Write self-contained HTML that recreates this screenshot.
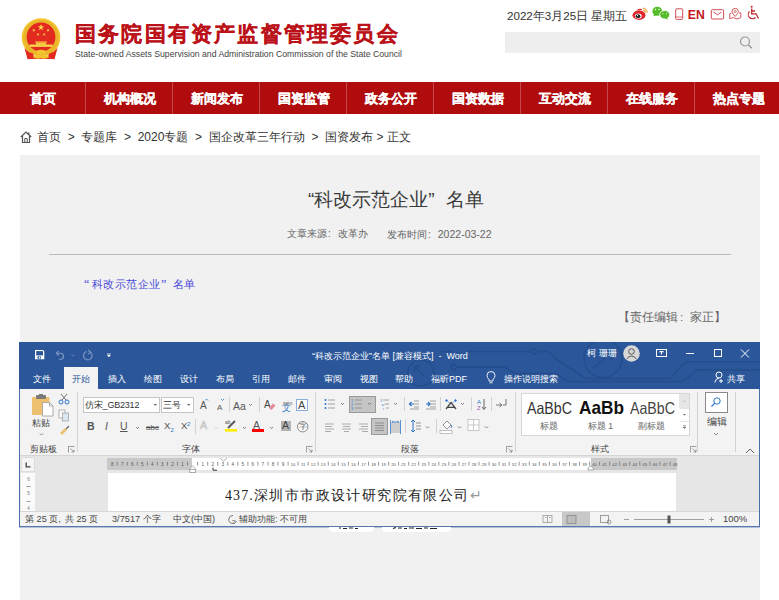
<!DOCTYPE html>
<html><head><meta charset="utf-8">
<style>
*{margin:0;padding:0;box-sizing:border-box}
html,body{width:779px;height:600px;overflow:hidden;background:#fff;font-family:"Liberation Sans",sans-serif;color:#333}
.a{position:absolute;white-space:nowrap}
#nav{position:absolute;left:0;top:82px;width:779px;height:32px;background:#b00c0e}
#nav div{position:absolute;top:0;height:32px;width:87px;color:#fff;font-weight:bold;font-size:13.2px;line-height:34px;text-align:center;-webkit-text-stroke:0.25px #fff}
#nav i{position:absolute;top:0;width:1px;height:32px;background:#c4474b}
#panel{position:absolute;left:20px;top:155px;width:740px;height:445px;background:#f1f1f1}
</style></head><body>
<!-- emblem -->
<svg class="a" style="left:20px;top:17px" width="42" height="44" viewBox="20 17 42 44">
  <circle cx="41" cy="37.5" r="19.3" fill="#f4c531"/>
  <circle cx="41" cy="37.5" r="17.6" fill="#eab52a"/>
  <circle cx="41" cy="37" r="14.4" fill="#e32a21"/>
  <polygon points="41.00,24.00 41.84,26.24 44.23,26.35 42.36,27.84 43.00,30.15 41.00,28.83 39.00,30.15 39.64,27.84 37.77,26.35 40.16,26.24" fill="#f9d448"/>
  <polygon points="34.38,28.70 34.39,29.90 35.50,30.36 34.36,30.74 34.27,31.93 33.56,30.97 32.39,31.25 33.09,30.28 32.46,29.25 33.60,29.61" fill="#f9d448"/>
  <polygon points="47.52,28.70 48.30,29.61 49.44,29.25 48.81,30.28 49.51,31.25 48.34,30.97 47.63,31.93 47.54,30.74 46.40,30.36 47.51,29.90" fill="#f9d448"/>
  <polygon points="38.28,32.82 38.48,33.93 39.58,34.18 38.59,34.72 38.70,35.84 37.88,35.06 36.85,35.51 37.33,34.49 36.59,33.65 37.71,33.80" fill="#f9d448"/>
  <polygon points="43.92,32.82 44.49,33.80 45.61,33.65 44.87,34.49 45.35,35.51 44.32,35.06 43.50,35.84 43.61,34.72 42.62,34.18 43.72,33.93" fill="#f9d448"/>
  <path d="M35.5 41.5 H46.5 L47.5 42.6 H34.5Z" fill="#f9d448"/>
  <rect x="36" y="42.6" width="10" height="2.2" fill="#f7cf3f"/>
  <rect x="29.5" y="44.5" width="23" height="2.4" fill="#f9d448"/>
  <path d="M25.5 47.5 Q41 58 56.5 47.5 L55.5 50.5 Q41 60 26.5 50.5Z" fill="#eab52a"/>
  <path d="M24.5 48 Q28 52.5 33 53.5 L34 58.8 L27.5 59.2 Z" fill="#e32a21"/>
  <path d="M57.5 48 Q54 52.5 49 53.5 L48 58.8 L54.5 59.2 Z" fill="#e32a21"/>
  <path d="M31 55 Q41 58.5 51 55 L51.5 59 H30.5Z" fill="#e32a21"/>
  <ellipse cx="41" cy="52" rx="5.5" ry="2.2" fill="#f4c531"/>
  <path d="M32.5 57 Q36.5 54.5 41 56.5 Q45.5 54.5 49.5 57 Q45.5 59.5 41 58.2 Q36.5 59.5 32.5 57Z" fill="#f4c531"/>
</svg>
<div class="a" style="left:75px;top:20px;font-size:21px;line-height:28px;font-weight:bold;color:#bb1219;letter-spacing:2.2px;-webkit-text-stroke:0.3px #bb1219">国务院国有资产监督管理委员会</div>
<div class="a" style="left:75px;top:48px;font-size:8.7px;line-height:12px;color:#444;letter-spacing:0px">State-owned Assets Supervision and Administration Commission of the State Council</div>

<div class="a" style="left:507px;top:8px;font-size:11.6px;line-height:16px;color:#333">2022年3月25日 星期五</div>
<div class="a" style="left:505px;top:32px;width:255px;height:21px;background:#eeeeee"></div>
<svg class="a" style="left:739px;top:36px" width="14" height="13" viewBox="0 0 14 13"><circle cx="6" cy="5.5" r="4.5" fill="none" stroke="#999" stroke-width="1.2"/><line x1="9.2" y1="8.8" x2="12.8" y2="12.3" stroke="#999" stroke-width="1.4"/></svg>


<!-- header icons -->
<svg class="a" style="left:631px;top:5px" width="130" height="16" viewBox="631 5 130 16">
 <ellipse cx="639" cy="15.3" rx="6.5" ry="4.7" fill="#e0262c"/>
 <path d="M636 10.5 Q640 7.5 642.5 10" fill="#e0262c"/>
 <ellipse cx="638.3" cy="16" rx="3.4" ry="2.6" fill="#fff"/>
 <ellipse cx="638" cy="16.2" rx="2.4" ry="1.9" fill="#222"/>
 <circle cx="637.5" cy="15.6" r="0.6" fill="#fff"/>
 <path d="M642.8 8.2 A4.5 4.5 0 0 1 647.2 12.8 M642.8 10.3 A2.5 2.5 0 0 1 645.2 12.8" fill="none" stroke="#f0a040" stroke-width="1.2"/>
 <ellipse cx="657.3" cy="11.2" rx="4.9" ry="4.5" fill="#55bd2a"/>
 <path d="M654 14 L653.5 16.5 L656.5 15Z" fill="#55bd2a"/>
 <ellipse cx="664.7" cy="14.7" rx="5" ry="4.2" fill="#55bd2a" stroke="#fff" stroke-width="0.8"/>
 <path d="M667 17.5 L668 19.5 L665 18.5Z" fill="#55bd2a"/>
 <circle cx="655.5" cy="9.5" r="0.7" fill="#fff"/><circle cx="659" cy="9.5" r="0.7" fill="#fff"/>
 <circle cx="663" cy="13.8" r="0.55" fill="#fff"/><circle cx="666.5" cy="13.8" r="0.55" fill="#fff"/>
 <rect x="675.7" y="8.8" width="7" height="10.6" rx="0.8" fill="none" stroke="#d44c52" stroke-width="1"/>
 <path d="M675.7 17 H682.7" stroke="#d44c52" stroke-width="0.8"/>
 <text x="687.8" y="19.2" font-family="Liberation Sans" font-weight="bold" font-size="12.2" fill="#c4161c">EN</text>
 <rect x="711.3" y="9.7" width="12.3" height="9.3" rx="1" fill="none" stroke="#d44c52" stroke-width="1"/>
 <path d="M713.5 12 L717.5 14.8 L721.5 12" fill="none" stroke="#d44c52" stroke-width="1"/>
 <path d="M731.5 13 L729.7 13.8 V18.8 L733 17.5 L737 19 L740.8 17.7 V12.6 L739 13.3" fill="none" stroke="#d44c52" stroke-width="0.9"/>
 <path d="M735.2 16.5 Q732 13 732 11.5 A3.2 3.2 0 0 1 738.4 11.5 Q738.4 13 735.2 16.5Z" fill="#fff" stroke="#d44c52" stroke-width="0.9"/>
 <circle cx="735.2" cy="11.4" r="1.1" fill="none" stroke="#d44c52" stroke-width="0.8"/>
 <circle cx="751.7" cy="6.8" r="1" fill="#c4262c"/>
 <path d="M751.7 8.5 V13.8 H756 L758.5 18.5 M751.7 11 H755" fill="none" stroke="#c4262c" stroke-width="1.3"/>
 <path d="M749.5 11.5 A4.1 4.1 0 1 0 755.5 17.5" fill="none" stroke="#c4262c" stroke-width="1.1"/>
</svg>
<!-- breadcrumb home -->
<svg class="a" style="left:20px;top:131px" width="12" height="12" viewBox="0 0 12 12">
 <path d="M0.8 6 L6 1 L11.2 6" fill="none" stroke="#555" stroke-width="1.2"/>
 <path d="M2.5 5 V11.5 H9.5 V5" fill="none" stroke="#555" stroke-width="1.2"/>
 <path d="M4.8 11.5 V7.5 H7.2 V11.5" fill="none" stroke="#555" stroke-width="1"/>
 <rect x="8" y="1.5" width="1.4" height="2.5" fill="#555"/>
</svg>
<div id="nav">
  <div style="left:-1px">首页</div><i style="left:85px"></i>
  <div style="left:86px">机构概况</div><i style="left:172px"></i>
  <div style="left:173px">新闻发布</div><i style="left:259px"></i>
  <div style="left:260px">国资监管</div><i style="left:346px"></i>
  <div style="left:347px">政务公开</div><i style="left:433px"></i>
  <div style="left:434px">国资数据</div><i style="left:520px"></i>
  <div style="left:521px">互动交流</div><i style="left:607px"></i>
  <div style="left:608px">在线服务</div><i style="left:694px"></i>
  <div style="left:695px">热点专题</div>
</div>
</div>

<div class="a" style="left:37px;top:130px;font-size:12px;line-height:14px;color:#333">首页 &nbsp;&gt;&nbsp; 专题库 &nbsp;&gt;&nbsp; 2020专题 &nbsp;&gt;&nbsp; 国企改革三年行动 &nbsp;&gt;&nbsp; 国资发布 &gt; 正文</div>

<div id="panel"></div>
<div class="a" style="left:308px;top:188px;font-size:19px;line-height:24px;color:#3a3a3a">“科改示范企业”</div><div class="a" style="left:446px;top:188px;font-size:19px;line-height:24px;color:#3a3a3a">名单</div>
<div class="a" style="left:287px;top:227px;font-size:10px;line-height:14px;color:#666">文章来源<span style="letter-spacing:7px;margin-left:1px">:</span>改革办</div><div class="a" style="left:387px;top:227px;font-size:10px;line-height:14px;color:#666">发布时间<span style="letter-spacing:7px;margin-left:1px">:</span><span style="font-size:10.5px">2022-03-22</span></div>
<div class="a" style="left:49px;top:254px;width:682px;height:1px;background:#bbb"></div>
<div class="a" style="left:84px;top:277px;font-size:12px;line-height:14px;color:#4848d8;font-family:'Liberation Serif',serif">“</div>
<div class="a" style="left:92px;top:277px;font-size:11px;line-height:14px;color:#4848d8;letter-spacing:0.45px">科改示范企业</div>
<div class="a" style="left:161px;top:277px;font-size:12px;line-height:14px;color:#4848d8;font-family:'Liberation Serif',serif">”</div>
<div class="a" style="left:173px;top:277px;font-size:11px;line-height:14px;color:#4848d8;letter-spacing:0.45px">名单</div>
<div class="a" style="left:618px;top:309px;font-size:11.5px;line-height:16px;color:#666">【责任编辑<span style="letter-spacing:7px;margin-left:2px">:</span>家正】</div>

<!-- WORD WINDOW -->
<style>
.w{position:absolute;white-space:nowrap;font-family:"Liberation Sans",sans-serif}
.wt{position:absolute;top:371.5px;font-size:9px;line-height:14px;color:#fff;white-space:nowrap}
.rl{position:absolute;font-size:9.3px;line-height:12px;color:#444;white-space:nowrap}
.sep{position:absolute;width:1px;background:#d2d2d2}
.dd{position:absolute;width:5px;height:5px}
</style>
<div class="w" style="left:19px;top:342px;width:741px;height:47px;background:#2b579a"></div>
<svg class="w" style="left:19px;top:342px" width="741" height="47" viewBox="19 342 741 47">
 <g fill="none" stroke="#234d8c" stroke-width="1.5">
  <path d="M468 351.6 H531.4 M536.6 351.6 H548 L560 361.8 L585.7 378.5 H670.4 L685.8 361.8 H760"/>
  <circle cx="534" cy="351.6" r="2.6"/>
  <circle cx="453.8" cy="367" r="2.6"/>
  <path d="M456.4 367 H504.5 L514.7 373.4 H556 L568 381.5 H683 L697 370 H760"/>
  <circle cx="603" cy="358.5" r="19"/>
  <path d="M593.5 368 L611 353 M604 353 H611 V360"/>
  <circle cx="420.8" cy="373" r="13"/>
  <path d="M424.3 376 L414.7 366.3 M414.7 372 V366.3 H420.4"/>
  <path d="M440 351.6 L452 351.6"/>
 </g>
</svg>
<!-- border -->
<div class="w" style="left:19px;top:389px;width:1px;height:138px;background:#4a6ea8"></div>
<div class="w" style="left:759px;top:389px;width:1px;height:138px;background:#4a6ea8"></div>
<div class="w" style="left:19px;top:526px;width:741px;height:1px;background:#5878ad"></div><div class="w" style="left:19px;top:527px;width:741px;height:1px;background:#b3c1d8"></div>
<!-- QAT -->
<svg class="w" style="left:34px;top:349px" width="80" height="12" viewBox="34 349 80 12">
 <path d="M35 350 H43 L44.3 351.3 V359.3 H35Z" fill="#fff"/>
 <rect x="36.2" y="351.1" width="6.8" height="4.3" fill="#2b579a"/>
 <rect x="37.5" y="356.4" width="3.5" height="2.3" fill="#2b579a"/>
 <rect x="39" y="356.9" width="1.2" height="1.5" fill="#fff"/>
 <g stroke="#7f98c4" fill="none" stroke-width="1.1">
  <path d="M56.5 353.2 H60.5 A3 3 0 0 1 60.5 359.2 H59"/><path d="M58.8 350.9 L56.3 353.2 L58.8 355.5"/>
  <path d="M71.3 354.5 l1.4 1.4 l1.4 -1.4" stroke-width="0.7"/>
  <path d="M86.5 351.5 A4.3 4.3 0 1 0 90.6 352.3"/><path d="M88.2 350 L90.8 352.4 L88 354"/>
 </g>
 <path d="M107 355 H110.8 L108.9 357.2Z" fill="#fff"/><rect x="107" y="353.6" width="3.8" height="0.8" fill="#fff"/>
</svg>
<div class="w" style="left:312px;top:350px;font-size:9px;line-height:12px;color:#fff">“科改示范企业”名单 [兼容模式] &nbsp;- &nbsp;Word</div>
<div class="w" style="left:587px;top:347px;font-size:9.2px;line-height:12px;color:#fff">柯 珊珊</div>
<svg class="w" style="left:623px;top:345px" width="17" height="17" viewBox="0 0 17 17">
 <circle cx="8.5" cy="8.5" r="8.3" fill="#d7d7d7"/>
 <circle cx="8.5" cy="6.5" r="2.8" fill="none" stroke="#555" stroke-width="1"/>
 <path d="M3.5 14 Q8.5 8 13.5 14" fill="none" stroke="#555" stroke-width="1"/>
</svg>
<svg class="w" style="left:655px;top:347px" width="100" height="12" viewBox="0 0 100 12">
 <g fill="none" stroke="#fff" stroke-width="1">
  <rect x="1.5" y="2.5" width="10" height="7"/><path d="M4.5 4.5 h4 M6.5 4 v3.5 M5 5.5 l1.5 -1.5 l1.5 1.5"/>
  <path d="M31 6.5 H39"/>
  <rect x="59.5" y="2.5" width="7" height="7"/>
  <path d="M86 2.5 L94 10.5 M94 2.5 L86 10.5"/>
 </g>
</svg>
<!-- tabs -->
<div class="w" style="left:64px;top:367px;width:34px;height:22px;background:#f3f3f3"></div>
<div class="wt" style="left:33px">文件</div>
<div class="wt" style="left:72px;color:#2b579a">开始</div>
<div class="wt" style="left:108px">插入</div>
<div class="wt" style="left:144px">绘图</div>
<div class="wt" style="left:180px">设计</div>
<div class="wt" style="left:216px">布局</div>
<div class="wt" style="left:252px">引用</div>
<div class="wt" style="left:288px">邮件</div>
<div class="wt" style="left:324px">审阅</div>
<div class="wt" style="left:360px">视图</div>
<div class="wt" style="left:395px">帮助</div>
<div class="wt" style="left:431px">福昕PDF</div>
<svg class="w" style="left:486px;top:371px" width="10" height="13" viewBox="0 0 10 13"><path d="M3 8.5 Q1 6.5 1 4.5 A4 4 0 0 1 9 4.5 Q9 6.5 7 8.5 V10 H3Z M3.5 11.8 H6.5" fill="none" stroke="#fff" stroke-width="0.9"/></svg>
<div class="wt" style="left:504px">操作说明搜索</div>
<svg class="w" style="left:714px;top:371px" width="11" height="12" viewBox="0 0 11 12"><circle cx="5" cy="4" r="3" fill="none" stroke="#fff" stroke-width="1"/><path d="M0.8 11.5 Q1.5 7.5 5 7.2 M7 8 V12 M5 10 H9" fill="none" stroke="#fff" stroke-width="1"/></svg>
<div class="wt" style="left:727px">共享</div>
<!-- ribbon -->
<div class="w" style="left:20px;top:389px;width:739px;height:66px;background:#f3f3f3"></div>
<div class="w" style="left:20px;top:455px;width:739px;height:1px;background:#d5d5d5"></div>


<!-- clipboard group -->
<svg class="w" style="left:31px;top:394px" width="40" height="43" viewBox="0 0 40 43">
 <rect x="1" y="3" width="17.5" height="18" rx="1" fill="#eec170"/>
 <rect x="5" y="1" width="10" height="4" rx="1" fill="#7b7b7b"/>
 <rect x="8" y="0" width="4" height="2" fill="#7b7b7b"/>
 <path d="M11.5 8.5 H18.5 L22 12 V22 H11.5Z" fill="#fff" stroke="#9a9a9a" stroke-width="0.8"/>
 <path d="M18.5 8.5 V12 H22" fill="none" stroke="#9a9a9a" stroke-width="0.8"/>
 <path d="M9 39.5 l1.5 1.5 l1.5 -1.5" fill="none" stroke="#666" stroke-width="0.8"/>
</svg>
<div class="rl" style="left:32px;top:417px;font-size:9px">粘贴</div>
<svg class="w" style="left:58px;top:393px" width="12" height="44" viewBox="0 0 12 44">
 <path d="M3 1 L8 7 M9 1 L4 7" stroke="#666" stroke-width="0.9" fill="none"/>
 <circle cx="3" cy="9" r="2" fill="none" stroke="#2e75c8" stroke-width="1"/><circle cx="9" cy="9" r="2" fill="none" stroke="#2e75c8" stroke-width="1"/>
 <rect x="1" y="17" width="6" height="8" fill="#fafafa" stroke="#999" stroke-width="0.7"/>
 <rect x="4.5" y="20" width="6" height="8" fill="#dbe6f3" stroke="#999" stroke-width="0.7"/>
 <path d="M2 40 L7 35 L9 37 L4 42Z" fill="#eec170"/><path d="M8 36 L11 33" stroke="#666" stroke-width="1.2"/>
</svg>
<div class="rl" style="left:30px;top:443px;font-size:9px">剪贴板</div>
<svg class="w" style="left:68px;top:446px" width="7" height="7" viewBox="0 0 7 7"><path d="M0.5 6.5 V0.5 H6.5 M2.5 2.5 L6 6 M6 3.5 V6 H3.5" fill="none" stroke="#777" stroke-width="0.7"/></svg>
<div class="sep" style="left:77px;top:392px;height:60px"></div>
<!-- font group -->
<div class="w" style="left:83px;top:397px;width:77px;height:16px;background:#fff;border:1px solid #c6c6c6"></div>
<div class="rl" style="left:85px;top:399px;font-size:9px;color:#333;letter-spacing:-0.2px">仿宋_GB2312</div>
<div class="w" style="left:161px;top:397px;width:33px;height:16px;background:#fff;border:1px solid #c6c6c6"></div>
<div class="rl" style="left:163px;top:399px;font-size:9.3px;color:#333">三号</div>
<svg class="w" style="left:150px;top:402px" width="45" height="6" viewBox="0 0 45 6"><path d="M3.5 2 H7 L5.25 3.8Z M37 2 H40.5 L38.75 3.8Z" fill="#666"/></svg>
<div class="rl" style="left:200px;top:400px;font-size:10px;color:#555">A</div>
<div class="rl" style="left:217px;top:402px;font-size:8px;color:#555">A</div>
<svg class="w" style="left:205px;top:398px" width="20" height="4" viewBox="0 0 20 4"><path d="M0 2.5 L1.5 1 L3 2.5" stroke="#2e75c8" fill="none" stroke-width="0.8"/><path d="M16 1 L17.5 2.5 L19 1" stroke="#2e75c8" fill="none" stroke-width="0.8"/></svg>
<div class="sep" style="left:229px;top:397px;height:15px"></div>
<div class="rl" style="left:233px;top:400px;font-size:10.5px;color:#555">Aa</div>
<div class="sep" style="left:259px;top:397px;height:15px"></div>
<div class="rl" style="left:264px;top:399px;font-size:10px;color:#444">A</div>
<svg class="w" style="left:268px;top:402px" width="8" height="8" viewBox="0 0 8 8"><path d="M1 6 L5 1.5 L7.5 3.5 L3.5 8Z" fill="#e58a9a"/></svg>
<div class="rl" style="left:283px;top:397px;font-size:5px;color:#555">wén</div>
<div class="rl" style="left:282px;top:402px;font-size:9px;color:#2e75c8">文</div>
<div class="w" style="left:296px;top:399px;width:12px;height:12px;border:1px solid #8cb0dd;background:#fff"></div>
<div class="rl" style="left:298px;top:399px;font-size:11px;color:#444">A</div>
<!-- row 2 -->
<div class="rl" style="left:87px;top:420px;font-size:10.5px;font-weight:bold;color:#555">B</div>
<div class="rl" style="left:105px;top:420px;font-size:10.5px;font-style:italic;color:#555">I</div>
<div class="rl" style="left:120px;top:420px;font-size:10.5px;color:#555;text-decoration:underline">U</div>
<div class="rl" style="left:146px;top:422px;font-size:8px;color:#555;text-decoration:line-through">abc</div>
<div class="rl" style="left:164px;top:420px;font-size:9.5px;color:#555">X</div><div class="rl" style="left:170.5px;top:424px;font-size:6px;color:#2e75c8">2</div>
<div class="rl" style="left:181px;top:420px;font-size:9.5px;color:#555">X</div><div class="rl" style="left:187px;top:418px;font-size:6px;color:#2e75c8">2</div>
<div class="sep" style="left:195px;top:419px;height:15px"></div>
<div class="rl" style="left:200px;top:419px;font-size:10.5px;color:#f3f3f3;-webkit-text-stroke:0.7px #c4c4c4">A</div>
<svg class="w" style="left:225px;top:419px" width="13" height="13" viewBox="0 0 13 13"><path d="M3 9 L10 2" stroke="#555" stroke-width="1.8"/><rect x="0" y="10" width="12" height="2.6" fill="#ffee00"/><text x="0" y="5" font-size="5" fill="#555" font-family="Liberation Sans">ab</text></svg>
<div class="rl" style="left:253px;top:419px;font-size:10.5px;color:#555">A</div>
<div class="w" style="left:252px;top:429px;width:12px;height:3px;background:#f00"></div>
<div class="w" style="left:281px;top:421px;width:10px;height:10px;background:#b3b3b3"></div>
<div class="rl" style="left:282px;top:419px;font-size:10.5px;color:#444">A</div>
<svg class="w" style="left:297px;top:421px" width="12" height="12" viewBox="0 0 12 12"><circle cx="5.7" cy="5.7" r="5.2" fill="#fff" stroke="#666" stroke-width="0.8"/></svg><div class="w" style="left:299px;top:422.5px;font-size:7.6px;line-height:8px;color:#555">字</div>
<svg class="w" style="left:134px;top:426px" width="140" height="5" viewBox="0 0 140 5"><g fill="none" stroke="#666" stroke-width="0.8"><path d="M2 1 l1.5 1.5 l1.5 -1.5"/><path d="M81 1 l1.5 1.5 l1.5 -1.5" stroke="#ccc"/><path d="M109 1 l1.5 1.5 l1.5 -1.5"/><path d="M136 1 l1.5 1.5 l1.5 -1.5"/></g></svg>
<svg class="w" style="left:248px;top:403px" width="6" height="5" viewBox="0 0 6 5"><path d="M1 1 l1.5 1.5 l1.5 -1.5" fill="none" stroke="#666" stroke-width="0.8"/></svg>
<div class="rl" style="left:182px;top:443px;font-size:9px">字体</div>
<svg class="w" style="left:306px;top:446px" width="7" height="7" viewBox="0 0 7 7"><path d="M0.5 6.5 V0.5 H6.5 M2.5 2.5 L6 6 M6 3.5 V6 H3.5" fill="none" stroke="#777" stroke-width="0.7"/></svg>
<div class="sep" style="left:315px;top:392px;height:60px"></div>
<!-- paragraph group -->
<svg class="w" style="left:322px;top:396px" width="192" height="40" viewBox="0 0 192 40">
 <g fill="#2e75c8"><circle cx="3.5" cy="4" r="1"/><circle cx="3.5" cy="8" r="1"/><circle cx="3.5" cy="12" r="1"/></g>
 <g stroke="#8a8a8a" stroke-width="0.8"><path d="M6 4 H13 M6 8 H13 M6 12 H13"/></g>
 <rect x="27.5" y="0.5" width="26" height="16" fill="#c5c5c5" stroke="#9a9a9a"/>
 <g stroke="#8a8a8a" stroke-width="0.8"><path d="M33 4 H40 M33 8 H40 M33 12 H40"/></g>
 <g fill="#2e75c8" font-size="4" font-family="Liberation Sans"><text x="29" y="5.5">1</text><text x="29" y="9.5">2</text><text x="29" y="13.5">3</text></g>
 <g stroke="#8a8a8a" stroke-width="0.8"><path d="M61 4 H67 M62.5 8 H67 M64 12 H67"/></g>
 <g fill="#2e75c8" font-size="4" font-family="Liberation Sans"><text x="58" y="5.5">1</text><text x="59.5" y="9.5">a</text><text x="61" y="13.5">i</text></g>
 <g fill="none" stroke="#666" stroke-width="0.8"><path d="M19 7 l1.5 1.5 l1.5 -1.5"/><path d="M46 7 l1.5 1.5 l1.5 -1.5"/><path d="M72 7 l1.5 1.5 l1.5 -1.5"/><path d="M139 7 l1.5 1.5 l1.5 -1.5"/><path d="M104 30.5 l1.5 1.5 l1.5 -1.5"/><path d="M136 30.5 l1.5 1.5 l1.5 -1.5"/><path d="M163 30.5 l1.5 1.5 l1.5 -1.5"/></g>
 <g fill="#d2d2d2"><rect x="82" y="1" width="1" height="14"/><rect x="118" y="1" width="1" height="14"/><rect x="149" y="1" width="1" height="14"/><rect x="169" y="1" width="1" height="14"/><rect x="83" y="23" width="1" height="14"/><rect x="114" y="23" width="1" height="14"/></g>
 <g stroke="#2e75c8" stroke-width="1.2" fill="none"><path d="M88 8 H92 M89.5 6 L87.5 8 L89.5 10"/><path d="M104 8 H108 M106 6 L108 8 L106 10"/></g>
 <g stroke="#999" stroke-width="0.9"><path d="M92 5 H97 M92 8 H97 M92 11 H97 M88 13 H97 M108 5 H114 M108 8 H114 M108 11 H114 M104 13 H114"/></g>
 <path d="M124 13 L129 6.5 L134 13 M125.5 11.3 H132.5" stroke="#444" stroke-width="1.3" fill="none"/>
 <g fill="#2e75c8"><path d="M124.5 3 L126 4.5 L124.5 6 L123 4.5Z M133.5 3 L135 4.5 L133.5 6 L132 4.5Z"/></g>
 <path d="M126 5.5 L127.5 7 M132 5.5 L130.5 7" stroke="#2e75c8" stroke-width="0.8"/>
 <text x="155" y="8" font-size="6" fill="#2e75c8" font-family="Liberation Sans">A</text><text x="155" y="14" font-size="6" fill="#9b59b6" font-family="Liberation Sans">Z</text>
 <path d="M162 3 V13 M160 11 L162 13.5 L164 11" stroke="#555" stroke-width="0.9" fill="none"/>
 <path d="M174 9 H180 M177.5 7 L180 9 L177.5 11 M181 9 H184 V3" stroke="#777" stroke-width="1" fill="none"/>
 <g stroke="#999" stroke-width="0.8"><path d="M3 28 H12 M3 30.5 H10 M3 33 H12 M3 35.5 H9"/><path d="M20 28 H29 M21 30.5 H28 M20 33 H29 M22 35.5 H27"/><path d="M37 28 H46 M39 30.5 H46 M37 33 H46 M40 35.5 H46"/></g>
 <rect x="49.5" y="22.5" width="16" height="16" fill="#c5c5c5" stroke="#9a9a9a"/>
 <g stroke="#888" stroke-width="0.9"><path d="M53 27 H62 M53 29.5 H62 M53 32 H62 M53 34.5 H62"/></g>
 <rect x="69" y="26" width="9" height="11" fill="#cfcfcf"/><path d="M68.5 24 V38 M78.5 24 V38 M70 26 H77 M70 26 l1.5 -1 M77 26 l-1.5 -1" stroke="#2e75c8" stroke-width="0.8" fill="none"/>
 <path d="M91 24 V36 M89 26 L91 24 L93 26 M89 34 L91 36 L93 34" stroke="#2e75c8" stroke-width="1" fill="none"/>
 <g stroke="#888" stroke-width="0.9"><path d="M94 27 H99 M94 30 H99 M94 33 H99"/></g>
 <path d="M121 29 L125 25 L129 29 L125 33Z" fill="#fff" stroke="#777" stroke-width="0.8"/><rect x="118" y="34.5" width="12" height="3" fill="#fff" stroke="#999" stroke-width="0.6"/><path d="M129 29 q1.5 2 0 3" stroke="#2e75c8" fill="none"/>
 <rect x="146" y="23.5" width="11" height="11" fill="#fff" stroke="#bbb" stroke-width="0.8"/><path d="M151.5 23.5 V34.5 M146 29 H157" stroke="#bbb" stroke-width="0.8"/>
</svg>
<div class="rl" style="left:401px;top:443px;font-size:9px">段落</div>
<svg class="w" style="left:506px;top:446px" width="7" height="7" viewBox="0 0 7 7"><path d="M0.5 6.5 V0.5 H6.5 M2.5 2.5 L6 6 M6 3.5 V6 H3.5" fill="none" stroke="#777" stroke-width="0.7"/></svg>
<div class="sep" style="left:515px;top:392px;height:60px"></div>
<!-- styles -->
<div class="w" style="left:521px;top:393px;width:169px;height:43px;background:#fff;border:1px solid #d6d6d6"></div>
<div class="w" style="left:679px;top:394px;width:10px;height:14px;background:#e6e6e6"></div>
<svg class="w" style="left:680px;top:396px" width="9" height="38" viewBox="0 0 9 38"><path d="M3 6 L4.5 4.5 L6 6" stroke="#bbb" fill="none" stroke-width="0.8"/><path d="M3 18 H6 L4.5 19.5Z" fill="#666"/><path d="M3 31 H6 L4.5 32.5Z M3 29.5 H6" fill="#666" stroke="#666" stroke-width="0.5"/><path d="M0 12.5 H9 M0 25.5 H9" stroke="#e3e3e3"/></svg>
<div class="rl" style="left:527px;top:398px;font-size:16.5px;line-height:20px;color:#333;transform:scaleX(0.86);transform-origin:0 0">AaBbC</div>
<div class="rl" style="left:579px;top:397.5px;font-size:18.5px;line-height:20px;color:#111;font-weight:bold;transform:scaleX(0.93);transform-origin:0 0">AaBb</div>
<div class="rl" style="left:630px;top:398px;font-size:16.5px;line-height:20px;color:#444;transform:scaleX(0.86);transform-origin:0 0">AaBbC</div>
<div class="rl" style="left:540px;top:420px;font-size:8.5px;color:#666">标题</div>
<div class="rl" style="left:588px;top:420px;font-size:8.5px;color:#666">标题 1</div>
<div class="rl" style="left:638px;top:420px;font-size:8.5px;color:#666">副标题</div>
<div class="rl" style="left:591px;top:443px;font-size:9px">样式</div>
<svg class="w" style="left:690px;top:446px" width="7" height="7" viewBox="0 0 7 7"><path d="M0.5 6.5 V0.5 H6.5 M2.5 2.5 L6 6 M6 3.5 V6 H3.5" fill="none" stroke="#777" stroke-width="0.7"/></svg>
<div class="sep" style="left:697px;top:392px;height:60px"></div>
<!-- editing -->
<div class="w" style="left:705px;top:392px;width:23px;height:21px;background:#fff;border:1px solid #8a8a8a"></div>
<svg class="w" style="left:710px;top:396px" width="12" height="12" viewBox="0 0 12 12"><circle cx="7" cy="5" r="3.2" fill="none" stroke="#2e75c8" stroke-width="1"/><path d="M4.8 7.2 L1.5 10.5" stroke="#2e75c8" stroke-width="1.2"/></svg>
<div class="rl" style="left:707px;top:416px;font-size:9.5px">编辑</div>
<svg class="w" style="left:713px;top:432px" width="6" height="4" viewBox="0 0 6 4"><path d="M1 1 l2 2 l2 -2" fill="none" stroke="#777" stroke-width="0.8"/></svg>
<div class="sep" style="left:735px;top:392px;height:60px"></div>
<svg class="w" style="left:745px;top:448px" width="10" height="6" viewBox="0 0 10 6"><path d="M1 5 L5 1 L9 5" fill="none" stroke="#555" stroke-width="0.9"/></svg>
<!-- ruler / doc -->
<div class="w" style="left:20px;top:456px;width:739px;height:55px;background:#e6e6e6"></div>
<div class="w" style="left:21px;top:457px;width:14px;height:15px;background:#f5f5f5;border:1px solid #dcdcdc"></div>
<svg class="w" style="left:25px;top:462px" width="7" height="6" viewBox="0 0 7 6"><path d="M1.2 0.5 V4.8 H5.5" stroke="#444" stroke-width="1.3" fill="none"/></svg>
<div class="w" style="left:21px;top:473px;width:14px;height:38px;background:#fafafa"></div><svg class="w" style="left:21px;top:473px" width="14" height="38" viewBox="0 0 14 38"><g stroke="#777" stroke-width="0.7"><path d="M5.5 13.5 H9.5 M5.5 28.5 H9.5"/></g><g fill="#777" font-family="Liberation Sans" font-size="4.5"><text x="7.5" y="7.5" text-anchor="middle">6</text><text x="7.5" y="22" text-anchor="middle">5</text><text x="7.5" y="36.5" text-anchor="middle">4</text></g></svg>
<div class="w" style="left:107px;top:458px;width:85px;height:12px;background:#c8c8c8"></div>
<div class="w" style="left:192px;top:458px;width:399px;height:12px;background:#fff"></div>
<div class="w" style="left:591px;top:458px;width:86px;height:12px;background:#c8c8c8"></div>
<div class="w" style="left:108px;top:473px;width:568px;height:38px;background:#fff"></div><svg class="w" style="left:0;top:458px" width="779" height="16" viewBox="0 0 779 16"><g fill="#555" font-family="Liberation Sans"><text x="182.5" y="7.8" font-size="4.6" text-anchor="middle">1</text><text x="172.5" y="7.8" font-size="4.6" text-anchor="middle">2</text><text x="162.4" y="7.8" font-size="4.6" text-anchor="middle">3</text><text x="152.4" y="7.8" font-size="4.6" text-anchor="middle">4</text><text x="142.3" y="7.8" font-size="4.6" text-anchor="middle">5</text><text x="132.3" y="7.8" font-size="4.6" text-anchor="middle">6</text><text x="122.2" y="7.8" font-size="4.6" text-anchor="middle">7</text><text x="112.2" y="7.8" font-size="4.6" text-anchor="middle">8</text><text x="202.7" y="7.8" font-size="4.6" text-anchor="middle">1</text><text x="212.7" y="7.8" font-size="4.6" text-anchor="middle">2</text><text x="222.8" y="7.8" font-size="4.6" text-anchor="middle">3</text><text x="232.8" y="7.8" font-size="4.6" text-anchor="middle">4</text><text x="242.8" y="7.8" font-size="4.6" text-anchor="middle">5</text><text x="252.9" y="7.8" font-size="4.6" text-anchor="middle">6</text><text x="262.9" y="7.8" font-size="4.6" text-anchor="middle">7</text><text x="273.0" y="7.8" font-size="4.6" text-anchor="middle">8</text><text x="283.1" y="7.8" font-size="4.6" text-anchor="middle">9</text><text x="293.1" y="7.8" font-size="4.2" text-anchor="middle">10</text><text x="303.1" y="7.8" font-size="4.2" text-anchor="middle">11</text><text x="313.2" y="7.8" font-size="4.2" text-anchor="middle">12</text><text x="323.2" y="7.8" font-size="4.2" text-anchor="middle">13</text><text x="333.3" y="7.8" font-size="4.2" text-anchor="middle">14</text><text x="343.4" y="7.8" font-size="4.2" text-anchor="middle">15</text><text x="353.4" y="7.8" font-size="4.2" text-anchor="middle">16</text><text x="363.5" y="7.8" font-size="4.2" text-anchor="middle">17</text><text x="373.5" y="7.8" font-size="4.2" text-anchor="middle">18</text><text x="383.6" y="7.8" font-size="4.2" text-anchor="middle">19</text><text x="393.6" y="7.8" font-size="4.2" text-anchor="middle">20</text><text x="403.6" y="7.8" font-size="4.2" text-anchor="middle">21</text><text x="413.7" y="7.8" font-size="4.2" text-anchor="middle">22</text><text x="423.8" y="7.8" font-size="4.2" text-anchor="middle">23</text><text x="433.8" y="7.8" font-size="4.2" text-anchor="middle">24</text><text x="443.9" y="7.8" font-size="4.2" text-anchor="middle">25</text><text x="453.9" y="7.8" font-size="4.2" text-anchor="middle">26</text><text x="464.0" y="7.8" font-size="4.2" text-anchor="middle">27</text><text x="474.0" y="7.8" font-size="4.2" text-anchor="middle">28</text><text x="484.1" y="7.8" font-size="4.2" text-anchor="middle">29</text><text x="494.1" y="7.8" font-size="4.2" text-anchor="middle">30</text><text x="504.1" y="7.8" font-size="4.2" text-anchor="middle">31</text><text x="514.2" y="7.8" font-size="4.2" text-anchor="middle">32</text><text x="524.2" y="7.8" font-size="4.2" text-anchor="middle">33</text><text x="534.3" y="7.8" font-size="4.2" text-anchor="middle">34</text><text x="544.4" y="7.8" font-size="4.2" text-anchor="middle">35</text><text x="554.4" y="7.8" font-size="4.2" text-anchor="middle">36</text><text x="564.5" y="7.8" font-size="4.2" text-anchor="middle">37</text><text x="574.5" y="7.8" font-size="4.2" text-anchor="middle">38</text><text x="584.6" y="7.8" font-size="4.2" text-anchor="middle">39</text><text x="594.6" y="7.8" font-size="4.2" text-anchor="middle">40</text><text x="604.6" y="7.8" font-size="4.2" text-anchor="middle">41</text><text x="614.7" y="7.8" font-size="4.2" text-anchor="middle">42</text><text x="624.8" y="7.8" font-size="4.2" text-anchor="middle">43</text><text x="634.8" y="7.8" font-size="4.2" text-anchor="middle">44</text><text x="644.9" y="7.8" font-size="4.2" text-anchor="middle">45</text><text x="654.9" y="7.8" font-size="4.2" text-anchor="middle">46</text><text x="665.0" y="7.8" font-size="4.2" text-anchor="middle">47</text><text x="675.0" y="7.8" font-size="4.2" text-anchor="middle">48</text></g><path d="M117.2 3.8 V7.6 M127.3 3.8 V7.6 M137.3 3.8 V7.6 M147.4 3.8 V7.6 M157.4 3.8 V7.6 M167.5 3.8 V7.6 M177.5 3.8 V7.6 M187.6 3.8 V7.6 M197.6 3.8 V7.6 M207.7 3.8 V7.6 M217.7 3.8 V7.6 M227.8 3.8 V7.6 M237.8 3.8 V7.6 M247.9 3.8 V7.6 M257.9 3.8 V7.6 M268.0 3.8 V7.6 M278.0 3.8 V7.6 M288.1 3.8 V7.6 M298.1 3.8 V7.6 M308.2 3.8 V7.6 M318.2 3.8 V7.6 M328.3 3.8 V7.6 M338.3 3.8 V7.6 M348.4 3.8 V7.6 M358.4 3.8 V7.6 M368.5 3.8 V7.6 M378.5 3.8 V7.6 M388.6 3.8 V7.6 M398.6 3.8 V7.6 M408.7 3.8 V7.6 M418.7 3.8 V7.6 M428.8 3.8 V7.6 M438.8 3.8 V7.6 M448.9 3.8 V7.6 M458.9 3.8 V7.6 M469.0 3.8 V7.6 M479.0 3.8 V7.6 M489.1 3.8 V7.6 M499.1 3.8 V7.6 M509.2 3.8 V7.6 M519.2 3.8 V7.6 M529.3 3.8 V7.6 M539.3 3.8 V7.6 M549.4 3.8 V7.6 M559.4 3.8 V7.6 M569.5 3.8 V7.6 M579.5 3.8 V7.6 M589.6 3.8 V7.6 M599.6 3.8 V7.6 M609.7 3.8 V7.6 M619.7 3.8 V7.6 M629.8 3.8 V7.6 M639.8 3.8 V7.6 M649.9 3.8 V7.6 M659.9 3.8 V7.6 M670.0 3.8 V7.6" stroke="#666" stroke-width="0.7"/><path d="M189.8 14.5 V10.5 L192.6 8 L195.4 10.5 V14.5Z" fill="#fff" stroke="#888" stroke-width="0.7"/><path d="M189.8 11.5 H195.4" stroke="#888" stroke-width="0.7"/><path d="M220.3 -1.5 H226.7 V0.5 L223.5 3 L220.3 0.5Z" fill="#fff" stroke="#888" stroke-width="0.7"/><path d="M213 9.5 V12.2 H217" fill="none" stroke="#333" stroke-width="1"/><path d="M588 12 V10 L590.7 8 L593.4 10 V12Z" fill="#fff" stroke="#888" stroke-width="0.7"/></svg>
<div class="w" style="left:225px;top:486.5px;font-family:'Liberation Serif',serif;font-size:13.5px;line-height:18px;letter-spacing:1.4px;color:#222"><span style="letter-spacing:1.1px;font-size:14px">437.</span>深圳市市政设计研究院有限公司<span style="color:#999;font-family:'Liberation Sans',sans-serif;letter-spacing:0">↵</span></div>
<!-- status -->
<div class="w" style="left:20px;top:511px;width:739px;height:15px;background:#f3f3f3;border-top:1px solid #d6d6d6"></div>
<div class="rl" style="left:25px;top:513px;font-size:9.2px;color:#444">第 25 页<span style="letter-spacing:4px">,</span>共 25 页</div><div class="rl" style="left:112px;top:513px;font-size:9.2px;color:#444">3/7517 个字</div><div class="rl" style="left:173px;top:513px;font-size:9.2px;color:#444">中文(中国)</div>
<svg class="w" style="left:228px;top:514px" width="10" height="11" viewBox="0 0 10 11"><path d="M5 1.5 A4 4 0 1 0 8.5 7" fill="none" stroke="#555" stroke-width="0.8"/><text x="4" y="10" font-size="6" fill="#555">?</text></svg>
<div class="rl" style="left:239px;top:513px;font-size:8.5px;color:#444">辅助功能: 不可用</div>
<div class="w" style="left:562px;top:512px;width:28px;height:14px;background:#c8c8c8"></div>
<svg class="w" style="left:540px;top:513px" width="210" height="12" viewBox="0 0 210 12">
 <g fill="none" stroke="#999" stroke-width="0.8"><rect x="3" y="2.5" width="9" height="7"/><path d="M7.5 2.5 V9.5 M5 4.5 H6.5 M9 4.5 H10.5"/></g>
 <rect x="27" y="2.5" width="9" height="8" fill="#bdbdbd" stroke="#888" stroke-width="0.8"/>
 <g fill="none" stroke="#888" stroke-width="0.8"><rect x="60.5" y="2.5" width="8" height="7"/><circle cx="69" cy="9" r="2"/></g>
 <path d="M84 6.5 H89 M94 6.5 H164 M169 6.5 H174 M171.5 4 V9" stroke="#999" stroke-width="0.9"/>
 <rect x="127.5" y="2.5" width="3" height="8" fill="#555"/>
</svg>
<div class="rl" style="left:723px;top:513px;font-size:9.5px;color:#444">100%</div>
<!-- below window -->
<div class="w" style="left:329px;top:527px;width:45px;height:5px;background:#fff;border-radius:0 0 4px 4px"></div>
<div class="w" style="left:382px;top:527px;width:69px;height:5px;background:#fff;border-radius:0 0 4px 4px"></div><svg class="w" style="left:330px;top:527px" width="120" height="4" viewBox="330 527 120 4">
 <g stroke="#222" stroke-width="1.2"><path d="M339 528 h2 M343 528.5 h4 M349 528 h4 M355 528.5 h3 M393 528.5 l3 -1 M398 528 h4 M404 528.5 h3 M409 528 h5 M416 528.5 h6 M424 528 h4 M430 528.5 h7"/></g>
</svg>

</body></html>
